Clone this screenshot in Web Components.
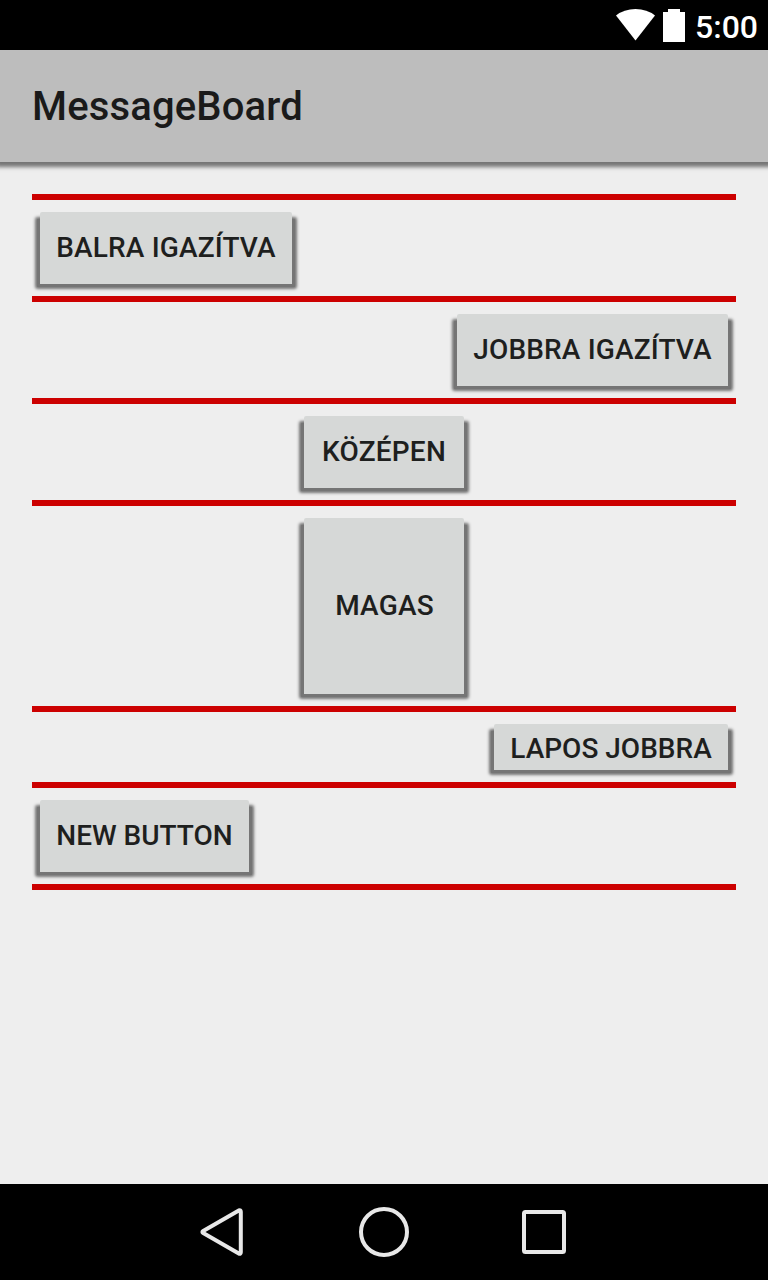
<!DOCTYPE html>
<html lang="hu">
<head>
<meta charset="utf-8">
<title>MessageBoard</title>
<style>
html, body { margin: 0; height: 100%; }
body { font-family: Roboto, "Liberation Sans", sans-serif; background: #eee; overflow: hidden; }
</style>
</head>
<body>
<phone-screen>
  <status-bar slot="status">5:00</status-bar>
  <app-bar slot="header">MessageBoard</app-bar>
  <board-row><raised-button style="--w:252px;--ls:.15px">BALRA IGAZÍTVA</raised-button></board-row>
  <board-row align="flex-end"><raised-button style="--w:271px;--ls:.15px">JOBBRA IGAZÍTVA</raised-button></board-row>
  <board-row align="center"><raised-button style="--w:160px;--ls:.2px">KÖZÉPEN</raised-button></board-row>
  <board-row align="center"><raised-button style="--w:160px;--h:176px;--ls:.2px;--nudge:1px">MAGAS</raised-button></board-row>
  <board-row align="flex-end"><raised-button style="--w:234px;--h:46px;--drop:4px">LAPOS JOBBRA</raised-button></board-row>
  <board-row><raised-button style="--w:209px">NEW BUTTON</raised-button></board-row>
  <nav-bar slot="footer"></nav-bar>
</phone-screen>
<script>
const define = (name, html, setup) => customElements.define(name, class extends HTMLElement {
  constructor() {
    super();
    const t = document.createElement('template');
    t.innerHTML = html;
    this.attachShadow({ mode: 'open' }).appendChild(t.content.cloneNode(true));
  }
  connectedCallback() { if (setup) setup(this); }
});

define('phone-screen', `
<style>
:host { display: flex; flex-direction: column; width: 768px; height: 1280px; background: #eee; }
main { flex: 1; padding: 32px 32px 0; }
.list { border-top: 6px solid #c00; }
</style>
<slot name="status"></slot><slot name="header"></slot>
<main><div class="list"><slot></slot></div></main>
<slot name="footer"></slot>`);

define('status-bar', `
<style>
:host { display: flex; box-sizing: border-box; height: 50px; background: #000; color: #fff; justify-content: space-between; padding: 0 10px 0 616px; font-size: 32px; font-weight: 500; line-height: 54px; }
svg { display: block; width: 72px; height: 50px; flex: none; }
</style>
<svg viewBox="616 0 72 50" fill="#fff"><path d="M616 15.5Q624 9 635.5 9T655 15.5L635.5 40.5Z"/><path d="M668 9h12v3h5v30h-22V12h5Z"/></svg>
<span><slot></slot></span>`);

define('app-bar', `
<style>
:host { display: block; position: relative; box-sizing: border-box; height: 112px; background: #bdbdbd; color: #1a1a1a; padding: 1px 0 0 32px; font-size: 40px; font-weight: 500; letter-spacing: .15px; line-height: 112px; box-shadow: 0 1px 4px 4px #757575; z-index: 0; clip-path: inset(0 0 -12px 0); }
</style>
<slot></slot>`);

define('board-row', `
<style>
:host { display: flex; justify-content: var(--align, flex-start); padding: 12px 8px; border-bottom: 6px solid #c00; }
</style>
<slot></slot>`, el => el.style.setProperty('--align', el.getAttribute('align') || 'flex-start'));

define('raised-button', `
<style>
:host { display: block; position: relative; width: var(--w); height: var(--h, 72px); }
:host::before { content: ""; position: absolute; inset: 7px -3px -3px; background: #757575; border-radius: 1px; box-shadow: 0 0 3px 1.5px #757575; }
button { position: relative; display: flex; box-sizing: border-box; align-items: center; justify-content: center; width: 100%; height: 100%; margin: 0; padding: var(--drop, 0px) 0 0 var(--nudge, 0px); border: 0; border-radius: 2px 2px 0 0; background: #d6d8d7; color: #1e1f1e; font: 500 28px/32px Roboto, "Liberation Sans", sans-serif; letter-spacing: var(--ls, 0); white-space: nowrap; }
span { display: block; }
</style>
<button><span><slot></slot></span></button>`);

define('nav-bar', `
<style>
:host { display: flex; height: 96px; background: #000; justify-content: center; }
svg { display: block; width: 160px; height: 96px; fill: none; stroke: #e8e8e8; stroke-width: 4; stroke-linejoin: round; }
</style>
<svg viewBox="144 0 160 96"><path d="M203.2 46.9L238.8 26.4Q240.8 25.6 240.8 27.8V68.2Q240.8 70.4 238.8 69.6L203.2 49.1Q201.6 48 203.2 46.9Z"/></svg>
<svg viewBox="304 0 160 96"><circle cx="384" cy="48" r="23"/></svg>
<svg viewBox="464 0 160 96"><rect x="524" y="28" width="40" height="40" rx="1.5"/></svg>`);
</script>
</body>
</html>
